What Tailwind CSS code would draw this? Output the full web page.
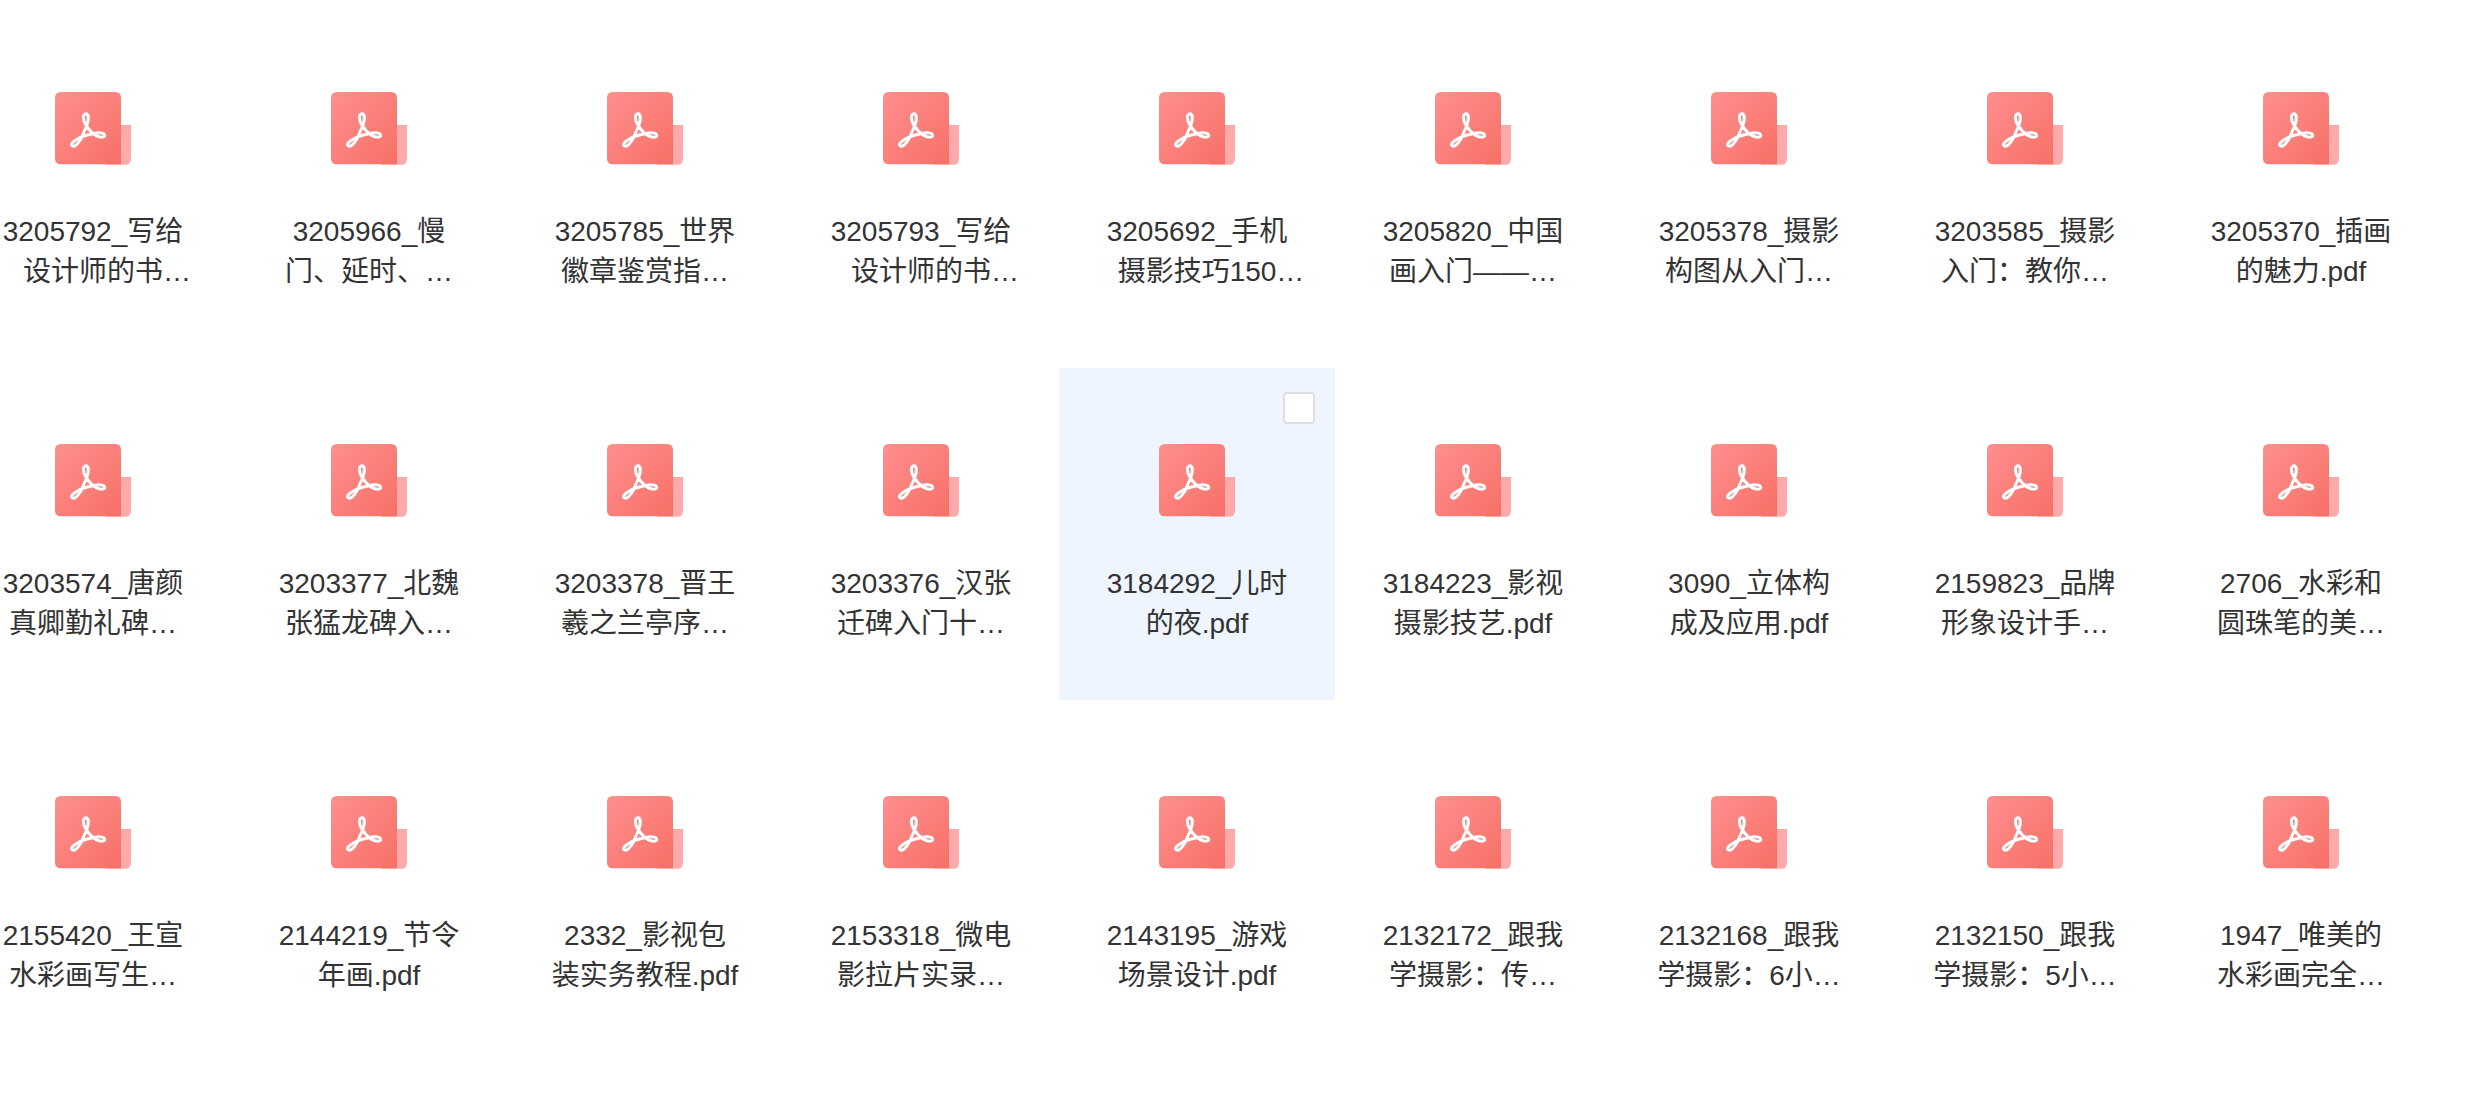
<!DOCTYPE html>
<html lang="zh-CN">
<head>
    <meta charset="UTF-8">
    <meta name="viewport" content="width=device-width, initial-scale=1.0">
    <title>PDF 文件列表</title>
    <script src="https://cdn.jsdelivr.net/npm/@tailwindcss/browser@4"></script>
</head>
<body class="min-h-screen overflow-x-hidden bg-white font-['Liberation_Sans','Noto_Sans_CJK_SC',sans-serif] text-[#333]">
    <!-- PDF icon, shared by every file -->
    <svg class="absolute size-0" aria-hidden="true">
        <defs>
            <linearGradient id="pdfRed" x1="0" y1="0" x2="1" y2="1">
                <stop offset="0" stop-color="#ff8f8f"/>
                <stop offset="1" stop-color="#f77066"/>
            </linearGradient>
        </defs>
        <symbol id="pdf" viewBox="0 0 228 219">
            <path d="M190 99H228V200Q228 218 210 218H150V190H190Z" fill="#ffa9ab"/>
            <path d="M18 0H180Q198 0 198 18V217H18Q0 217 0 199V18Q0 0 18 0Z" fill="url(#pdfRed)"/>
            <path d="M93 65C82 65 84 85 92 98C99 110 110 122 122 130C136 138 149 137 149 130C149 121 130 121 114 125C98 128 80 133 67 141C54 148 46 157 51 161C58 167 70 155 78 140C84 128 90 112 96 98C101 85 103 66 93 65Z" fill="none" stroke="#fff" stroke-width="9" stroke-linejoin="round"/>
        </symbol>
    </svg>

    <main class="-ml-[45px] pt-4">
        <ul id="files" class="grid grid-cols-[repeat(auto-fill,276px)] gap-y-5"></ul>
    </main>

    <template id="fileTemplate">
        <li class="relative flex h-[332px] flex-col items-center pt-[76px]">
            <svg class="h-[73px] w-[76px]" aria-hidden="true"><use href="#pdf"/></svg>
            <p class="mt-[47px] text-center text-[28px] leading-10 whitespace-pre"></p>
        </li>
    </template>

    <script>
        const files = [
            '3205792_写给\n　设计师的书…',
            '3205966_慢\n门、延时、…',
            '3205785_世界\n徽章鉴赏指…',
            '3205793_写给\n　设计师的书…',
            '3205692_手机\n　摄影技巧150…',
            '3205820_中国\n画入门——…',
            '3205378_摄影\n构图从入门…',
            '3203585_摄影\n入门：教你…',
            '3205370_插画\n的魅力.pdf',
            '3203574_唐颜\n真卿勤礼碑…',
            '3203377_北魏\n张猛龙碑入…',
            '3203378_晋王\n羲之兰亭序…',
            '3203376_汉张\n迁碑入门十…',
            '3184292_儿时\n的夜.pdf',
            '3184223_影视\n摄影技艺.pdf',
            '3090_立体构\n成及应用.pdf',
            '2159823_品牌\n形象设计手…',
            '2706_水彩和\n圆珠笔的美…',
            '2155420_王宣\n水彩画写生…',
            '2144219_节令\n年画.pdf',
            '2332_影视包\n装实务教程.pdf',
            '2153318_微电\n影拉片实录…',
            '2143195_游戏\n场景设计.pdf',
            '2132172_跟我\n学摄影：传…',
            '2132168_跟我\n学摄影：6小…',
            '2132150_跟我\n学摄影：5小…',
            '1947_唯美的\n水彩画完全…'
        ];
        const activeIndex = 13;

        const list = document.getElementById('files');
        const template = document.getElementById('fileTemplate');

        files.forEach((name, index) => {
            const item = template.content.cloneNode(true).firstElementChild;
            item.querySelector('p').textContent = name;

            // the active file is highlighted and can be ticked
            if (index === activeIndex) {
                item.classList.add('bg-[#eef5ff]');
                const checkbox = document.createElement('input');
                checkbox.type = 'checkbox';
                checkbox.setAttribute('aria-label', name.replace('\n', ''));
                checkbox.className = 'absolute top-6 right-5 size-8 appearance-none rounded border-2 border-[#dfdfdf] bg-white checked:bg-blue-500';
                item.appendChild(checkbox);
            }
            list.appendChild(item);
        });
    </script>
</body>
</html>
